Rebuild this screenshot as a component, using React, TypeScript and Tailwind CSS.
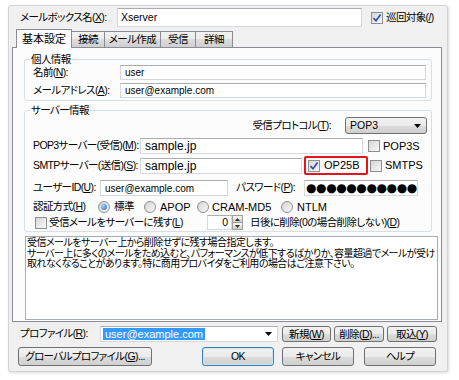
import React from 'react';

const face = 'bg-[linear-gradient(#f2f2f2,#ebebeb_50%,#dddddd_50%,#cfcfcf)]';
// narrow japanese label text, close to MS UI Gothic widths
const L = 'text-[10.5px] tracking-[-0.6px] whitespace-nowrap';

function Check({ on = false }: { on?: boolean }) {
  return (
    <span className="flex w-[12px] h-[12px] shrink-0 items-center justify-center border border-[#8e8f8f] bg-[linear-gradient(135deg,#d6d6d6,#f8f8f8)]">
      {on && (
        <svg width="10" height="10" viewBox="0 0 10 10">
          <path d="M1.5 5.2 L4 7.8 L8.6 1.6" fill="none" stroke="#2b4fa8" strokeWidth="1.7" />
        </svg>
      )}
    </span>
  );
}

function Radio({ on = false }: { on?: boolean }) {
  return (
    <span className="flex w-[12px] h-[12px] shrink-0 items-center justify-center rounded-full border border-[#8e8f8f] bg-[linear-gradient(135deg,#d2d2d2,#fafafa)]">
      {on && <span className="w-[6px] h-[6px] rounded-full bg-[radial-gradient(circle_at_35%_35%,#a9d4ff,#1e5cc8)]" />}
    </span>
  );
}

function Field({ className, children }: { className: string; children?: React.ReactNode }) {
  return (
    <div className={`flex items-center overflow-hidden bg-white border border-[#d5d9de] border-t-[#abadb3] ${className}`}>
      {children}
    </div>
  );
}

function Btn({ className, children, def = false }: { className: string; children: React.ReactNode; def?: boolean }) {
  return (
    <div
      className={`flex h-full items-center justify-center rounded-[3px] border leading-none ${L} ${face} ${
        def ? 'border-[#3c7fb1] shadow-[inset_0_0_0_1px_#c9e6f8]' : 'border-[#707070]'
      } ${className}`}
    >
      {children}
    </div>
  );
}

function Tab({ label, className, active = false }: { label: string; className: string; active?: boolean }) {
  if (active) {
    return (
      <div className={`relative z-10 -mb-px flex h-[19px] items-center justify-center border border-b-0 border-[#898c95] bg-[#fcfcfc] text-[11px] ${className}`}>
        {label}
      </div>
    );
  }
  return (
    <div className={`flex h-[16px] items-center justify-center border border-b-0 border-l-0 border-[#898c95] ${L} ${face} ${className}`}>
      {label}
    </div>
  );
}

function Group({ title, className, children }: { title: string; className: string; children: React.ReactNode }) {
  return (
    <fieldset className={`ml-[11px] w-[408px] rounded-[3px] border border-[#d5dfe5] ${className}`}>
      <legend className={`ml-[5px] px-[1px] leading-[12px] ${L}`}>{title}</legend>
      {children}
    </fieldset>
  );
}

const Arrow = () => (
  <svg width="7" height="4" viewBox="0 0 7 4">
    <path d="M0 0 H7 L3.5 4 Z" fill="#000" />
  </svg>
);

export default function App() {
  return (
    <div className="w-[459px] h-[380px] bg-white pl-[8px] pt-[5px] text-black font-['Liberation_Sans','Noto_Sans_CJK_JP',sans-serif] [font-feature-settings:'palt']">
      <div className="flex w-[440px] flex-col rounded-[3px] border border-[#d4d4d4] bg-[#f0f0f0] pb-[5px] shadow-[1px_1px_3px_rgba(0,0,0,0.15)]">
        {/* mailbox name */}
        <div className="mt-[2px] flex h-[19px] items-center">
          <span className={`w-[108px] pl-[11px] ${L}`}>
            メールボックス名(<u>X</u>):
          </span>
          <Field className="w-[245px] h-[19px] px-[3px]">
            <span className="text-[10.5px]">Xserver</span>
          </Field>
          <span className="ml-[9px]">
            <Check on />
          </span>
          <span className={`ml-[3px] ${L}`}>
            巡回対象(<u>/</u>)
          </span>
        </div>

        {/* tabs */}
        <div className="mt-[2px] ml-[7px] flex h-[18px] items-end">
          <Tab label="基本設定" className="w-[56px]" active />
          <Tab label="接続" className="w-[33px]" />
          <Tab label="メール作成" className="w-[56px]" />
          <Tab label="受信" className="w-[35px]" />
          <Tab label="詳細" className="w-[37px]" />
        </div>

        {/* panel */}
        <div className="ml-[3px] flex w-[430px] flex-col border border-[#898c95] bg-[#fcfcfc] pt-[5px] pb-[1px]">
          <Group title="個人情報" className="">
            <div className="flex flex-col gap-[3px] pb-[2px]">
              <div className="flex h-[15px] items-center">
                <span className={`w-[95px] pl-[8px] ${L}`}>
                  名前(<u>N</u>):
                </span>
                <Field className="w-[306px] h-[15px] px-[4px]">
                  <span className="text-[10px]">user</span>
                </Field>
              </div>
              <div className="flex h-[15px] items-center">
                <span className={`w-[95px] pl-[8px] ${L}`}>
                  メールアドレス(<u>A</u>):
                </span>
                <Field className="w-[306px] h-[15px] px-[4px]">
                  <span className="text-[10px]">user@example.com</span>
                </Field>
              </div>
            </div>
          </Group>

          <Group title="サーバー情報" className="mt-[3px]">
            <div className="flex flex-col pb-[1px] text-[11px]">
              <div className="mt-[1px] flex h-[17px] items-center justify-end pr-[4px]">
                <span className={L}>
                  受信プロトコル(<u>T</u>):
                </span>
                <div className={`ml-[14px] flex h-[17px] w-[82px] items-center justify-between rounded-[3px] border border-[#707070] pl-[4px] pr-[5px] ${face}`}>
                  <span className="text-[10.5px]">POP3</span>
                  <Arrow />
                </div>
              </div>

              <div className="mt-[4px] flex h-[16px] items-center">
                <span className={`w-[115px] pl-[8px] ${L}`}>
                  POP3サーバー(受信)(<u>M</u>):
                </span>
                <Field className="w-[223px] h-[16px] px-[4px]">
                  <span className="text-[12px]">sample.jp</span>
                </Field>
                <span className="ml-[5px]">
                  <Check />
                </span>
                <span className="ml-[3px]">POP3S</span>
              </div>

              <div className="mt-[2px] flex h-[19px] items-center">
                <span className={`w-[115px] pl-[8px] ${L}`}>
                  SMTPサーバー(送信)(<u>S</u>):
                </span>
                <Field className="w-[162px] h-[16px] px-[4px]">
                  <span className="text-[12px]">sample.jp</span>
                </Field>
                <div className="ml-[2px] flex h-[19px] w-[64px] items-center rounded-[2px] border-2 border-[#e5141c] pl-[2px]">
                  <Check on />
                  <span className="ml-[4px]">OP25B</span>
                </div>
                <span className="ml-[2px]">
                  <Check />
                </span>
                <span className="ml-[3px]">SMTPS</span>
              </div>

              <div className="mt-[5px] flex h-[16px] items-center">
                <span className={`w-[75px] pl-[8px] ${L}`}>
                  ユーザーID(<u>U</u>):
                </span>
                <Field className="w-[128px] h-[16px] px-[4px]">
                  <span className="text-[10px]">user@example.com</span>
                </Field>
                <span className={`w-[76px] pr-[9px] text-right ${L}`}>
                  パスワード(<u>P</u>):
                </span>
                <Field className="w-[114px] h-[16px] pl-[1px]">
                  <span className="font-['DejaVu_Sans'] text-[12px] leading-none tracking-[-0.4px] whitespace-nowrap">●●●●●●●●●●●●</span>
                </Field>
              </div>

              <div className="mt-[4px] flex h-[14px] items-center">
                <span className={`w-[73px] pl-[8px] ${L}`}>
                  認証方式(<u>H</u>)
                </span>
                <div className="flex w-[46px] items-center">
                  <Radio on />
                  <span className={`ml-[4px] ${L}`}>標準</span>
                </div>
                <div className="flex w-[53px] items-center">
                  <Radio />
                  <span className="ml-[4px]">APOP</span>
                </div>
                <div className="flex w-[84px] items-center">
                  <Radio />
                  <span className="ml-[3px]">CRAM-MD5</span>
                </div>
                <div className="flex items-center">
                  <Radio />
                  <span className="ml-[4px]">NTLM</span>
                </div>
              </div>

              <div className="mt-[1px] flex h-[15px] items-center">
                <div className="flex w-[182px] items-center pl-[10px]">
                  <Check />
                  <span className={`ml-[2px] ${L}`}>
                    受信メールをサーバーに残す(<u>L</u>)
                  </span>
                </div>
                <Field className="w-[25px] h-[15px] justify-end px-[3px]">
                  <span className="text-[10.5px]">0</span>
                </Field>
                <div className="flex h-[15px] w-[11px] flex-col">
                  <div className={`flex flex-1 items-center justify-center border border-[#a0a0a0] ${face}`}>
                    <svg width="5" height="3" viewBox="0 0 5 3">
                      <path d="M0 3 H5 L2.5 0 Z" fill="#333" />
                    </svg>
                  </div>
                  <div className={`flex flex-1 items-center justify-center border border-t-0 border-[#a0a0a0] ${face}`}>
                    <svg width="5" height="3" viewBox="0 0 5 3">
                      <path d="M0 0 H5 L2.5 3 Z" fill="#333" />
                    </svg>
                  </div>
                </div>
                <span className={`ml-[7px] ${L}`}>
                  日後に削除(0の場合削除しない)(<u>D</u>)
                </span>
              </div>
            </div>
          </Group>

          <div className="mt-[4px] ml-[12px] h-[84px] w-[413px] border border-[#a5acb5] bg-white pl-[1px] pt-[1px] text-[10px] leading-[10.5px] tracking-[-0.55px] whitespace-nowrap">
            <p>受信メールをサーバー上から削除せずに残す場合指定します。</p>
            <p>サーバー上に多くのメールをため込むと、パフォーマンスが低下するばかりか、容量超過でメールが受け</p>
            <p>取れなくなることがあります。特に商用プロバイダをご利用の場合はご注意下さい。</p>
          </div>
        </div>

        {/* profile */}
        <div className="mt-[4px] flex h-[16px] items-center">
          <span className={`w-[91px] pl-[11px] ${L}`}>
            プロファイル(<u>R</u>):
          </span>
          <Field className="w-[178px] h-[16px] justify-between pl-[2px] pr-[5px]">
            <span className="bg-[#3399ff] px-[2px] text-[11px] leading-[12px] text-white">user@example.com</span>
            <Arrow />
          </Field>
          <div className="ml-[4px] h-[16px]">
            <Btn className="w-[49px]">
              新規(<u>W</u>)
            </Btn>
          </div>
          <div className="ml-[3px] h-[16px]">
            <Btn className="w-[50px]">
              削除(<u>D</u>)...
            </Btn>
          </div>
          <div className="ml-[3px] h-[16px]">
            <Btn className="w-[50px]">
              取込(<u>Y</u>)
            </Btn>
          </div>
        </div>

        {/* buttons */}
        <div className="mt-[5px] flex h-[19px] items-center">
          <div className="ml-[9px] h-[19px]">
            <Btn className="w-[134px]">
              グローバルプロファイル(<u>G</u>)...
            </Btn>
          </div>
          <div className="ml-[50px] h-[19px]">
            <Btn className="w-[72px]" def>
              OK
            </Btn>
          </div>
          <div className="ml-[8px] h-[19px]">
            <Btn className="w-[72px]">キャンセル</Btn>
          </div>
          <div className="ml-[10px] h-[19px]">
            <Btn className="w-[72px]">ヘルプ</Btn>
          </div>
        </div>
      </div>
    </div>
  );
}
